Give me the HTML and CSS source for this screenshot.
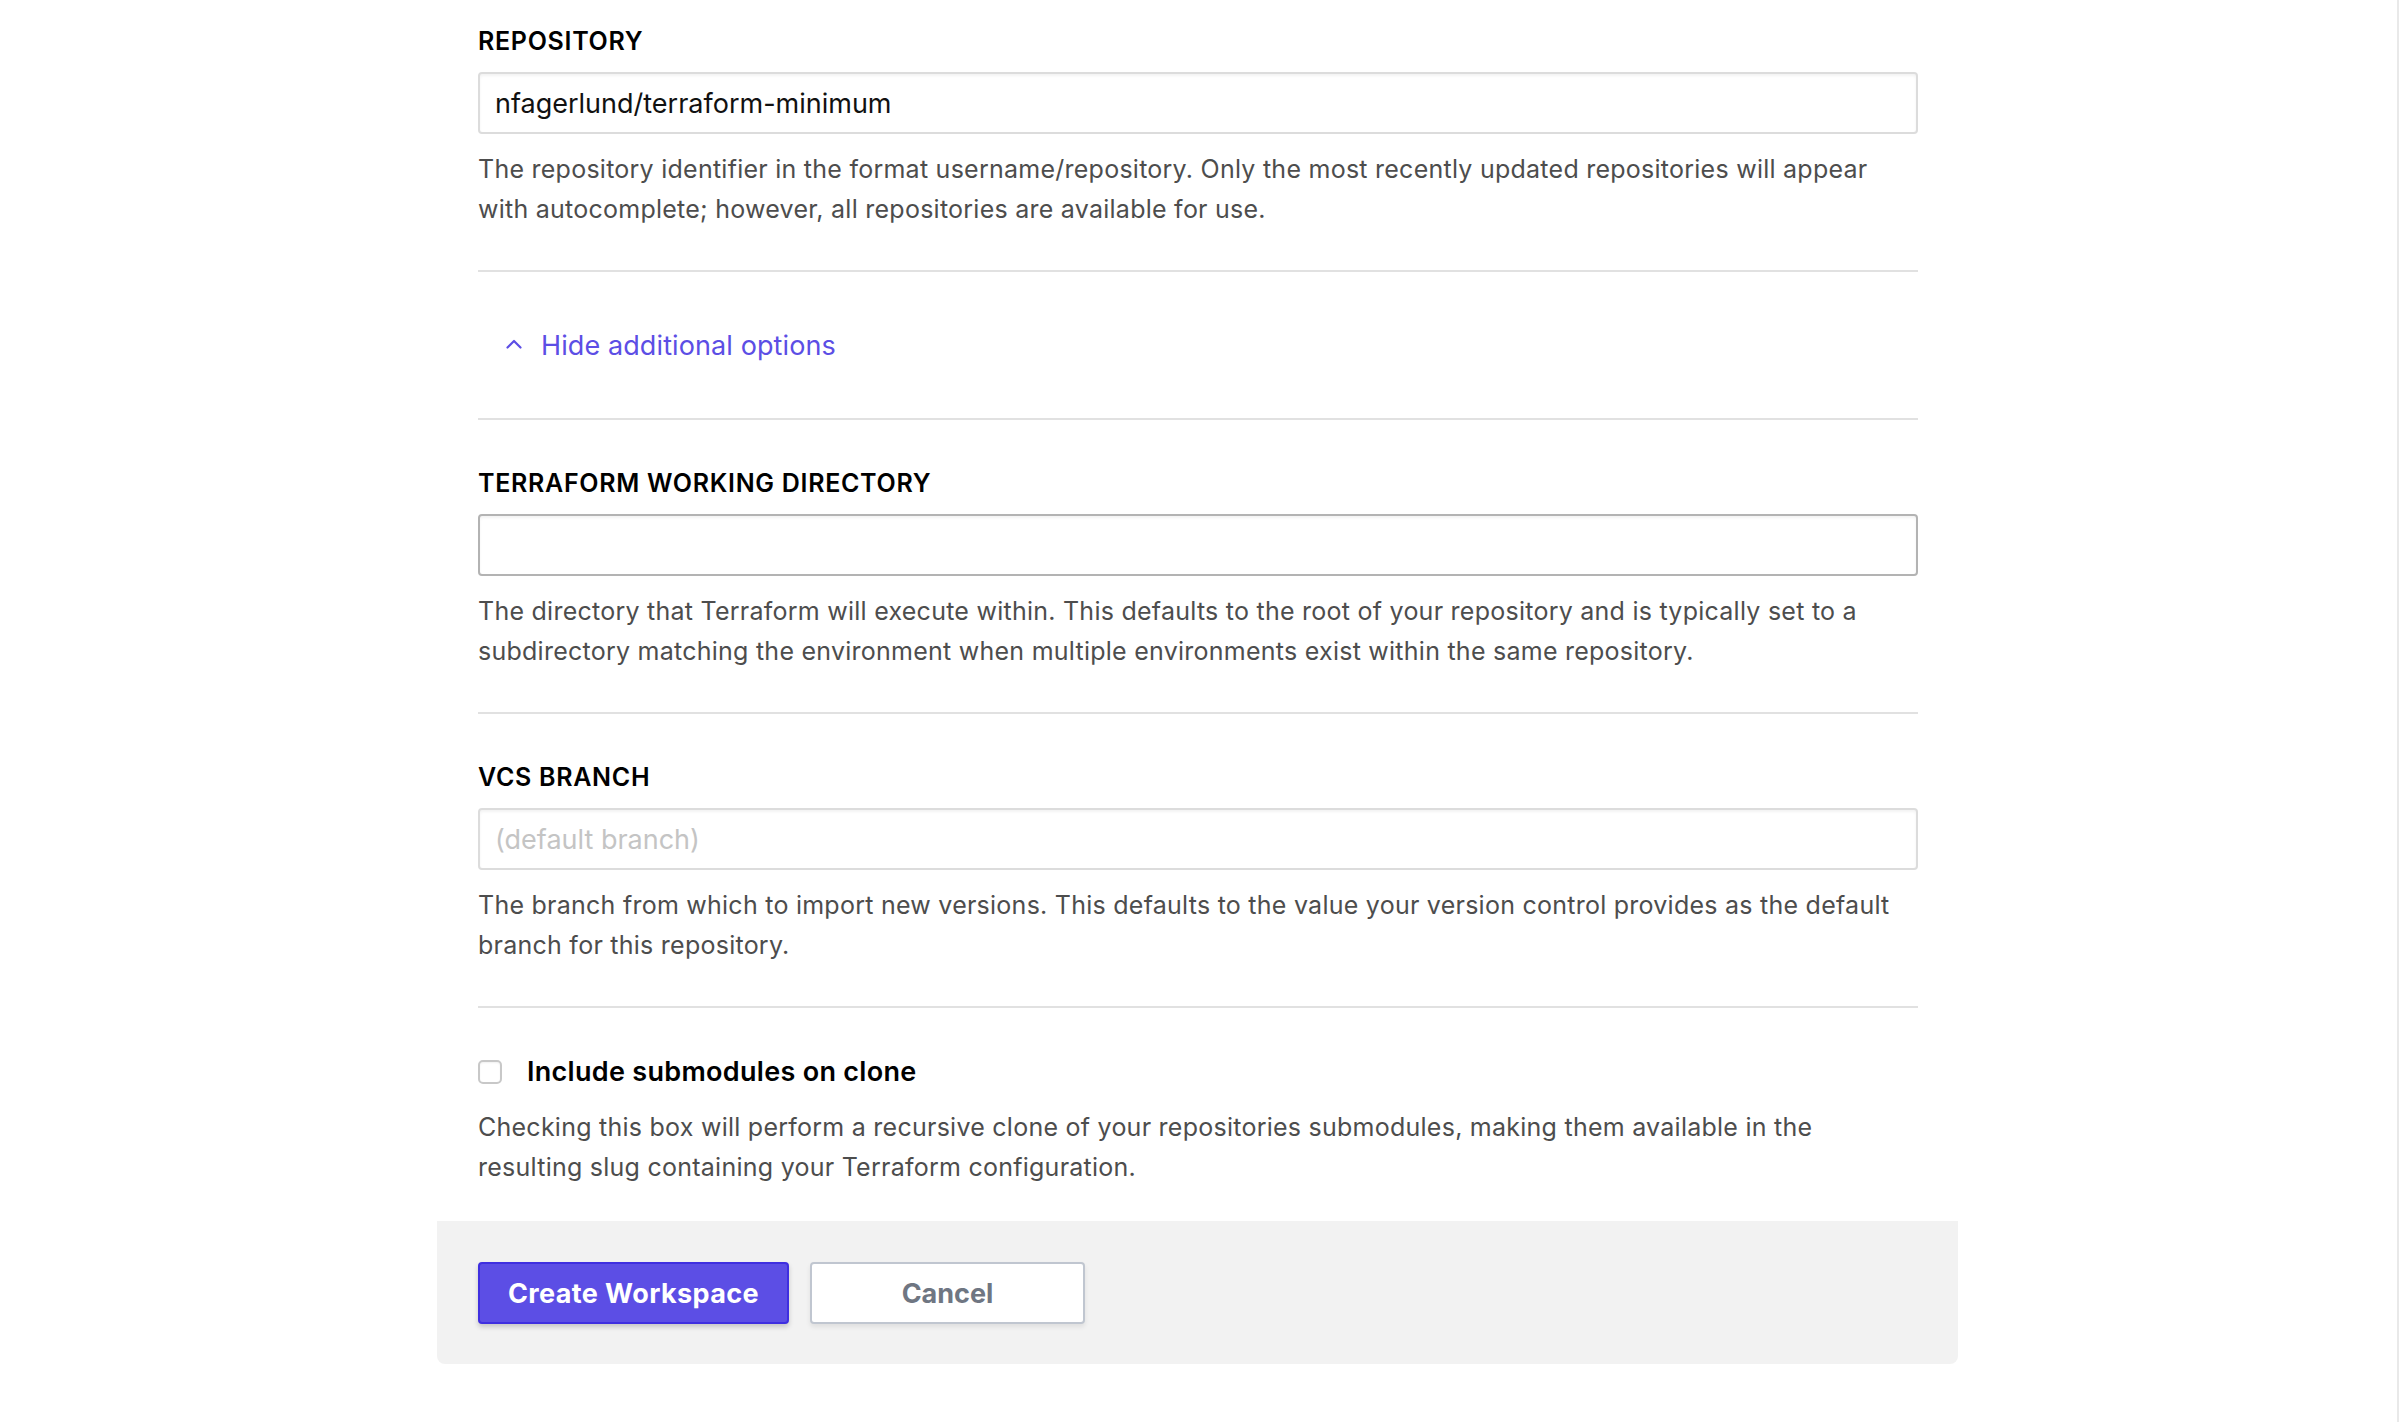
FILE: index.html
```html
<!DOCTYPE html>
<html>
<head>
<meta charset="utf-8">
<link rel="stylesheet" href="styles.css">
</head>
<body>
<div class="page">
  <div class="wrap">
    <div class="form">
      <section class="field first">
        <div class="label">REPOSITORY</div>
        <div class="input">nfagerlund/terraform-minimum</div>
        <p class="help">The repository identifier in the format username/repository. Only the most recently updated repositories will appear with autocomplete; however, all repositories are available for use.</p>
      </section>
      <hr class="divider">
      <div class="toggle">
        <svg class="chev" width="16" height="10" viewBox="0 0 16 10"><path d="M1.5 8.5 L8 2 L14.5 8.5" fill="none" stroke="#5c4ee5" stroke-width="2.2" stroke-linecap="round" stroke-linejoin="round"/></svg>
        <span class="toggle-text">Hide additional options</span>
      </div>
      <hr class="divider">
      <section class="field">
        <div class="label">TERRAFORM WORKING DIRECTORY</div>
        <div class="input focused"></div>
        <p class="help">The directory that Terraform will execute within. This defaults to the root of your repository and is typically set to a subdirectory matching the environment when multiple environments exist within the same repository.</p>
      </section>
      <hr class="divider">
      <section class="field">
        <div class="label">VCS BRANCH</div>
        <div class="input placeholder">(default branch)</div>
        <p class="help">The branch from which to import new versions. This defaults to the value your version control provides as the default branch for this repository.</p>
      </section>
      <hr class="divider">
      <section class="check-field">
        <div class="check-row">
          <span class="checkbox"></span>
          <span class="check-label">Include submodules on clone</span>
        </div>
        <p class="help check-help">Checking this box will perform a recursive clone of your repositories submodules, making them available in the resulting slug containing your Terraform configuration.</p>
      </section>
    </div>
    <div class="footer">
      <button class="btn primary">Create Workspace</button>
      <button class="btn secondary">Cancel</button>
    </div>
  </div>
  <div class="edge"></div>
</div>
</body>
</html>
```

FILE: styles.css
```css
html, body {
  margin: 0;
  padding: 0;
  background: #ffffff;
}

body {
  font-family: Inter, "Noto Sans", "Liberation Sans", sans-serif;
  color: #000;
}

.page {
  position: relative;
  width: 2402px;
  height: 1422px;
  overflow: hidden;
}

.edge {
  position: absolute;
  top: 0;
  left: 2397px;
  width: 2px;
  height: 1422px;
  background: #e9e9e9;
}

.wrap {
  margin-left: 437px;
  width: 1521px;
}

.form {
  padding: 0 40px 0 41px;
}

.field {
  padding: 48px 0 41px;
}

.field.first {
  padding-top: 26px;
}

.label {
  font-size: 25px;
  line-height: 30px;
  font-weight: 600;
  letter-spacing: 0.7px;
  color: #000;
}

.input {
  box-sizing: border-box;
  margin-top: 16px;
  height: 62px;
  border: 2px solid #dcdcdc;
  border-radius: 4px;
  box-shadow: inset 0 2px 3px rgba(0,0,0,0.05);
  padding: 0 15px;
  font-size: 27px;
  line-height: 60px;
  color: #111;
  background: #fff;
}

.input.focused {
  border-color: #b3b3b3;
}

.input.placeholder {
  color: #c4c4c4;
}

.help {
  margin: 15px 0 0;
  font-size: 25px;
  line-height: 40px;
  color: #4d4d4d;
  letter-spacing: 0.25px;
}

.divider {
  margin: 0;
  border: 0;
  height: 2px;
  background: #e1e1e1;
}

.toggle {
  display: flex;
  align-items: center;
  padding: 54px 0 52px 28px;
  height: 40px;
}

.chev {
  display: block;
  margin-right: 19px;
  margin-top: -4px;
}

.toggle-text {
  font-size: 27px;
  line-height: 40px;
  color: #5c4ee5;
  letter-spacing: 0.1px;
}

.check-field {
  padding-top: 48px;
  padding-bottom: 34px;
}

.check-row {
  display: flex;
  align-items: center;
  height: 32px;
}

.checkbox {
  box-sizing: border-box;
  width: 24px;
  height: 24px;
  border: 2px solid #c8c8c8;
  border-radius: 5px;
  background: #fff;
  box-shadow: inset 0 1px 2px rgba(0,0,0,0.06);
  margin-right: 25px;
}

.check-label {
  font-size: 27px;
  line-height: 32px;
  font-weight: 600;
  letter-spacing: 0.3px;
  color: #000;
}

.check-help {
  margin-top: 19px;
}

.footer {
  display: flex;
  gap: 21px;
  background: #f2f2f2;
  border-radius: 0 0 8px 8px;
  padding: 41px 41px 40px;
}

.btn {
  box-sizing: border-box;
  height: 62px;
  border-radius: 4px;
  font-family: Inter, "Noto Sans", "Liberation Sans", sans-serif;
  font-size: 27px;
  font-weight: 700;
  letter-spacing: 0.4px;
  padding: 0;
  cursor: pointer;
}

.btn.primary {
  width: 311px;
  background: #5c4ee5;
  border: 2px solid #3f2fe0;
  color: #fff;
  box-shadow: 0 3px 5px rgba(0,0,0,0.18);
}

.btn.secondary {
  width: 275px;
  background: #fff;
  border: 2px solid #c0c6d0;
  color: #6f7682;
  letter-spacing: 0;
  box-shadow: 0 3px 5px rgba(0,0,0,0.08);
}
```
